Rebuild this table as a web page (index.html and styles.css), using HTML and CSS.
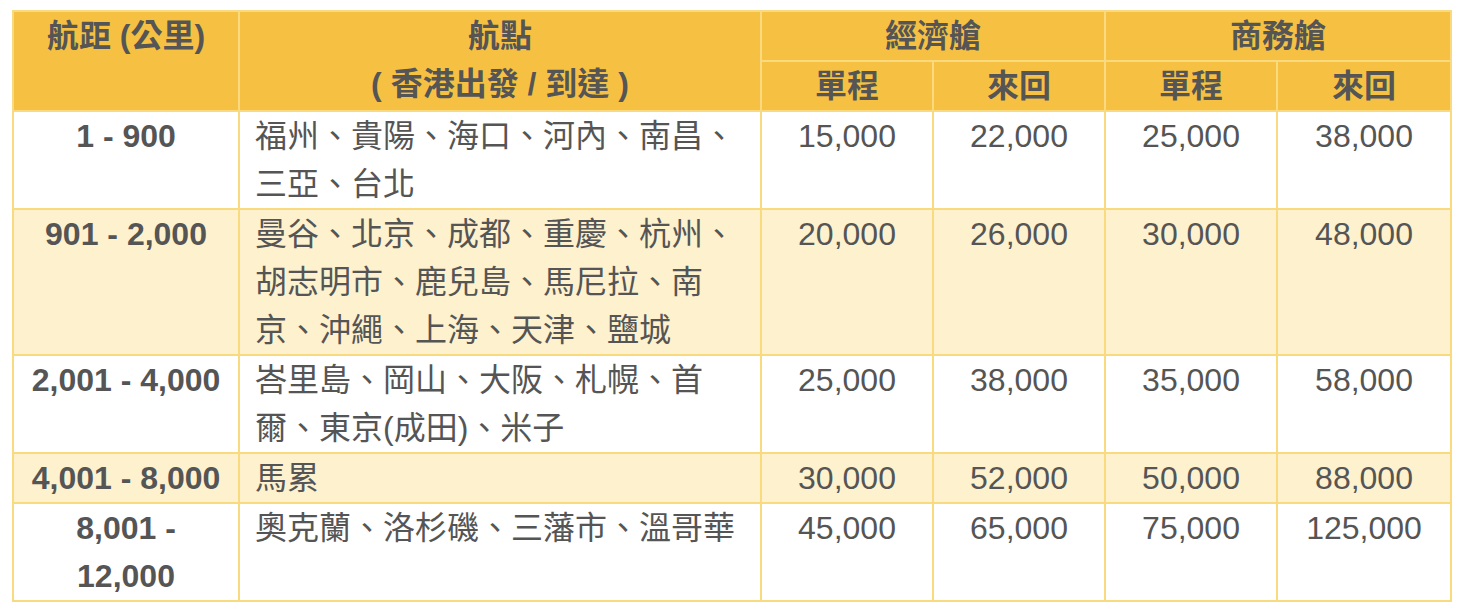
FILE: index.html
```html
<!DOCTYPE html>
<html lang="zh-Hant">
<head>
<meta charset="utf-8">
<title>航距表</title>
<link rel="stylesheet" href="styles.css">
</head>
<body>
<table class="miles">
  <colgroup>
    <col class="c-dist">
    <col class="c-route">
    <col class="c-num">
    <col class="c-num">
    <col class="c-num">
    <col class="c-last">
  </colgroup>
  <thead>
    <tr>
      <th rowspan="2" class="h-top">航距 (公里)</th>
      <th rowspan="2" class="h-top">航點<br>( 香港出發 / 到達 )</th>
      <th colspan="2">經濟艙</th>
      <th colspan="2">商務艙</th>
    </tr>
    <tr>
      <th>單程</th>
      <th>來回</th>
      <th>單程</th>
      <th>來回</th>
    </tr>
  </thead>
  <tbody>
    <tr>
      <td class="dist">1 - 900</td>
      <td class="route">福州、貴陽、海口、河內、南昌、三亞、台北</td>
      <td class="num">15,000</td>
      <td class="num">22,000</td>
      <td class="num">25,000</td>
      <td class="num">38,000</td>
    </tr>
    <tr class="alt">
      <td class="dist">901 - 2,000</td>
      <td class="route">曼谷、北京、成都、重慶、杭州、胡志明市、鹿兒島、馬尼拉、南京、沖繩、上海、天津、鹽城</td>
      <td class="num">20,000</td>
      <td class="num">26,000</td>
      <td class="num">30,000</td>
      <td class="num">48,000</td>
    </tr>
    <tr>
      <td class="dist">2,001 - 4,000</td>
      <td class="route">峇里島、岡山、大阪、札幌、首爾、東京(成田)、米子</td>
      <td class="num">25,000</td>
      <td class="num">38,000</td>
      <td class="num">35,000</td>
      <td class="num">58,000</td>
    </tr>
    <tr class="alt">
      <td class="dist">4,001 - 8,000</td>
      <td class="route">馬累</td>
      <td class="num">30,000</td>
      <td class="num">52,000</td>
      <td class="num">50,000</td>
      <td class="num">88,000</td>
    </tr>
    <tr>
      <td class="dist">8,001 - 12,000</td>
      <td class="route">奧克蘭、洛杉磯、三藩市、溫哥華</td>
      <td class="num">45,000</td>
      <td class="num">65,000</td>
      <td class="num">75,000</td>
      <td class="num">125,000</td>
    </tr>
  </tbody>
</table>
</body>
</html>
```

FILE: styles.css
```css
html, body {
  margin: 0;
  padding: 0;
  background: #ffffff;
}

body {
  font-family: "Liberation Sans", "Noto Sans CJK TC", sans-serif;
  color: #555555;
}

.miles {
  margin: 10px 0 0 12px;
  width: 1440px;
  table-layout: fixed;
  border-collapse: collapse;
  font-size: 32px;
  line-height: 48px;
}

.c-dist { width: 226px; }
.c-route { width: 522px; }
.c-num { width: 172px; }
.c-last { width: 174px; }

.miles th,
.miles td {
  border: 2px solid #f9da7e;
  padding: 0 15px;
  vertical-align: top;
}

.miles th {
  background: #f6c143;
  font-weight: bold;
  text-align: center;
}

.miles td {
  background: #ffffff;
}

.miles tr.alt td {
  background: #fdf1ce;
}

.dist {
  font-weight: bold;
  text-align: center;
}

.route {
  text-align: left;
}

.num {
  text-align: center;
}
```
